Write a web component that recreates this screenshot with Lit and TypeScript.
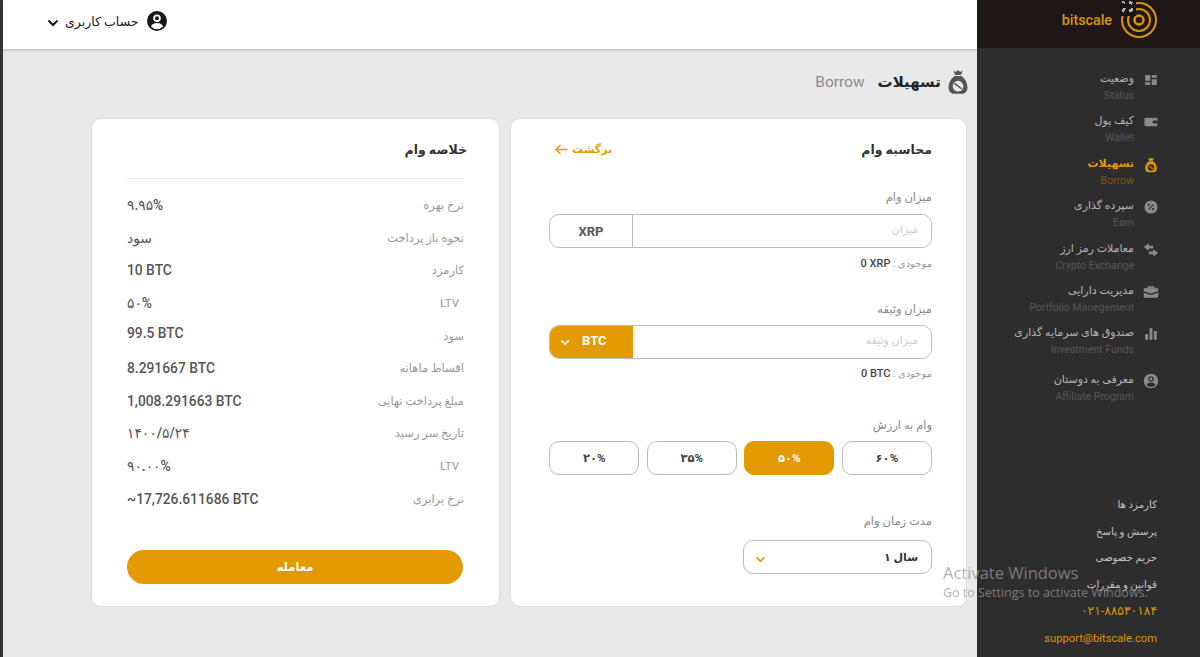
import { LitElement, html, css, svg } from 'lit';
import { customElement } from 'lit/decorators.js';

const ICONS: Record<string, unknown> = {
  status: svg`<path d="M3 4h7v8H3zM12 4h7v4h-7zM12 10h7v8h-7zM3 14h7v4H3z"/>`,
  wallet: svg`<path fill-rule="evenodd" d="M4 5h14a2 2 0 0 1 2 2v8a2 2 0 0 1-2 2H4a2 2 0 0 1-2-2V7a2 2 0 0 1 2-2zm11 4a2 2 0 0 0 0 4h5V9z"/>`,
  bag: svg`<path fill-rule="evenodd" d="M7 1l2 1.500L11 1l2 1.500L15 1l-1.500 4h-5zM8 6h6c3 2.500 5 5.500 5 9.500 0 3.500-2 5.500-4.500 5.500h-7C5 21 3 19 3 15.500 3 11.500 5 8.500 8 6zm3 4a4.500 4.500 0 1 0 0 9 4.500 4.500 0 0 0 0-9zm-2.600 1.700l6 4.600-.8.900-6-4.600z"/>`,
  earn: svg`<path fill-rule="evenodd" d="M11 2a9 9 0 1 1 0 18 9 9 0 0 1 0-18zM14 7l-7 7 1 1 7-7zM8 6.500a1.500 1.500 0 1 0 0 3 1.500 1.500 0 0 0 0-3zm6 6a1.500 1.500 0 1 0 0 3 1.500 1.500 0 0 0 0-3z"/>`,
  exchange: svg`<path d="M8 2L1 7l7 5V9h6V5H8zM14 10l7 5-7 5v-3H8v-4h6z"/>`,
  case: svg`<path d="M8 3h6a2 2 0 0 1 2 2v1h4a1 1 0 0 1 1 1v3l-10 3L1 10V7a1 1 0 0 1 1-1h4V5a2 2 0 0 1 2-2zm0 3h6V5H8zM1 12l10 3 10-3v6a1 1 0 0 1-1 1H2a1 1 0 0 1-1-1z"/>`,
  bars: svg`<path d="M3 11h4v8H3zM9 3h4v16H9zM15 7h4v12h-4z"/>`,
  user: svg`<path fill-rule="evenodd" d="M11 1a10 10 0 1 1 0 20 10 10 0 0 1 0-20zm0 3.500a3.800 3.800 0 1 0 0 7.600 3.800 3.800 0 0 0 0-7.600zm0 1.800a2 2 0 1 1 0 4 2 2 0 0 1 0-4zM11 13c-3 0-5.500 1.300-6 3.500a8 8 0 0 0 12 0c-.5-2.200-3-3.500-6-3.500z"/>`,
};

const icon = (name: string) =>
  html`<svg viewBox="0 0 22 22" fill="currentColor">${ICONS[name]}</svg>`;

const chevron = html`<svg class="chev" viewBox="0 0 12 8" fill="none" stroke="currentColor" stroke-width="2"><path d="M1.500 1.500L6 6l4.500-4.500"/></svg>`;

const NAV = [
  { ic: 'status', fa: 'وضعیت', en: 'Status' },
  { ic: 'wallet', fa: 'کیف پول', en: 'Wallet' },
  { ic: 'bag', fa: 'تسهیلات', en: 'Borrow', active: true },
  { ic: 'earn', fa: 'سپرده گذاری', en: 'Earn' },
  { ic: 'exchange', fa: 'معاملات رمز ارز', en: 'Crypto Exchange' },
  { ic: 'case', fa: 'مدیریت دارایی', en: 'Portfolio Manegement' },
  { ic: 'bars', fa: 'صندوق های سرمایه گذاری', en: 'Investment Funds' },
  { ic: 'user', fa: 'معرفی به دوستان', en: 'Affiliate Program' },
];

const SUMMARY = [
  ['نرخ بهره', '۹.۹۵%'],
  ['نحوه باز پرداخت', 'سود'],
  ['کارمزد', '10 BTC'],
  ['LTV', '۵۰%'],
  ['سود', '99.5 BTC'],
  ['اقساط ماهانه', '8.291667 BTC'],
  ['مبلغ پرداخت نهایی', '1,008.291663 BTC'],
  ['تاریخ سر رسید', '۱۴۰۰/۵/۲۴'],
  ['LTV', '۹۰.۰۰%'],
  ['نرخ برابری', '~17,726.611686 BTC'],
];

const FOOTER = ['کارمزد ها', 'پرسش و پاسخ', 'حریم خصوصی', 'قوانین و مقررات'];

@customElement('app-root')
export class AppRoot extends LitElement {
  static styles = css`
    :host {
      display: flex;
      width: 1200px;
      height: 657px;
      overflow: hidden;
      position: relative;
      direction: rtl;
      font-family: Roboto, 'DejaVu Sans', sans-serif;
      background: #e9e9e9;
    }

    /* sidebar */
    .side {
      width: 223px;
      flex: none;
      background: #2d2d2d;
      display: flex;
      flex-direction: column;
    }
    .brand {
      height: 48px;
      flex: none;
      background: #1f1716;
      display: flex;
      align-items: center;
      gap: 8px;
      padding: 0 42px 8px 0;
      box-sizing: border-box;
      position: relative;
    }
    .rings {
      width: 38px;
      height: 38px;
    }
    .brand span {
      color: #d9950a;
      font-size: 14.300px;
      font-weight: 500;
      direction: ltr;
    }
    .glitch {
      position: absolute;
      top: 0;
      left: 143px;
      width: 16px;
      height: 16px;
    }
    .nav {
      padding: 21px 38px 0 0;
      display: flex;
      flex-direction: column;
    }
    .item {
      display: flex;
      gap: 6px;
      height: 42.400px;
      color: #8a8a8a;
    }
    .item:nth-child(8) {
      margin-top: 4px;
    }
    .item svg {
      width: 22px;
      height: 16px;
      flex: none;
      margin-top: 3px;
    }
    .item .fa {
      font-size: 11px;
      line-height: 20px;
      color: #b4b4b4;
    }
    .item .en {
      font-size: 10.500px;
      line-height: 14px;
      color: #555;
      direction: ltr;
      text-align: right;
    }
    .item.active, .item.active .fa {
      color: #e39a00;
      font-weight: 700;
    }
    .item.active .en {
      color: #7a5a12;
      font-weight: 400;
    }
    .foot {
      margin-top: auto;
      padding: 0 43px 5px 0;
      display: flex;
      flex-direction: column;
    }
    .foot div {
      height: 26.900px;
      line-height: 27px;
      font-size: 10.200px;
      color: #c4c4c4;
    }
    .foot .ph {
      color: #d9950a;
      font-size: 12.300px;
      direction: ltr;
      text-align: right;
    }
    .foot .mail {
      color: #d9950a;
      font-size: 11.200px;
      direction: ltr;
      text-align: right;
    }

    /* main column */
    .main {
      flex: 1;
      min-width: 0;
      display: flex;
      flex-direction: column;
      border-left: 3px solid #333;
    }
    .top {
      height: 49px;
      flex: none;
      box-sizing: border-box;
      background: #fff;
      box-shadow: 0 1px 3px rgba(0, 0, 0, 0.25);
      display: flex;
      justify-content: flex-end;
      align-items: center;
      padding: 0 0 7px 44px;
    }
    .acct {
      display: flex;
      align-items: center;
      gap: 7px;
      font-size: 12.500px;
      color: #222;
    }
    .acct svg {
      width: 22px;
      height: 22px;
      color: #1c1516;
    }
    .acct .chev {
      width: 12px;
      height: 8px;
      margin-right: -1px;
      margin-top: 3px;
    }
    .body {
      flex: 1;
      padding: 20px 10px 0 0;
    }
    .title {
      display: flex;
      align-items: center;
      height: 26px;
      gap: 13px;
    }
    .title svg {
      width: 26px;
      height: 26px;
      color: #555;
      margin: 0 -3.500px 0 -9.500px;
    }
    .title b {
      font-size: 15px;
      color: #222;
    }
    .title span {
      font-size: 15.500px;
      color: #8c8c8c;
      direction: ltr;
    }
    .cards {
      display: flex;
      gap: 10px;
      margin-top: 23px;
    }
    .card {
      height: 489px;
      box-sizing: border-box;
      background: #fff;
      border: 1px solid #ddd;
      border-radius: 10px;
    }
    .calc {
      width: 457px;
      padding: 18px 34px 0 38px;
    }
    .sum {
      width: 409px;
      padding: 18px 36px 0 35px;
    }
    .head {
      display: flex;
      justify-content: space-between;
      align-items: center;
      height: 24px;
      font-size: 12.500px;
      font-weight: 700;
      color: #333;
    }
    .sum .head {
      margin-right: -4px;
    }
    .back {
      display: flex;
      align-items: center;
      gap: 4px;
      font-size: 11px;
      color: #e39a00;
      margin-left: 6px;
    }
    .back svg {
      width: 13px;
      height: 11px;
    }
    .label {
      font-size: 11.500px;
      line-height: 16px;
      color: #888;
    }
    .f1 { margin-top: 28px; }
    .f2 { margin-top: 29px; }
    .f3 { margin-top: 35px; }
    .f4 { margin-top: 38px; }
    .group {
      display: flex;
      height: 34px;
      margin-top: 8px;
      box-sizing: border-box;
      border: 1px solid #bbb;
      border-radius: 10px;
      overflow: hidden;
    }
    .f1 + .group {
      margin-top: 9px;
    }
    .f1 + .group + .bal {
      margin-top: 8px;
    }
    .group input {
      flex: 1;
      min-width: 0;
      border: none;
      outline: none;
      padding: 0 13px 3px;
      font: 11px Roboto, 'DejaVu Sans', sans-serif;
      direction: rtl;
    }
    .group input::placeholder {
      color: #ccc;
    }
    .cur {
      width: 83px;
      flex: none;
      box-sizing: border-box;
      border-right: 1px solid #bbb;
      display: flex;
      align-items: center;
      justify-content: center;
      direction: ltr;
      font-size: 13px;
      font-weight: 700;
      color: #555;
    }
    .cur.on {
      background: #e39a00;
      border-right: none;
      color: #fff;
      margin: -1px 0 -1px -1px;
      height: 34px;
      width: 84px;
      justify-content: flex-start;
      gap: 12px;
      padding: 0 0 3px 11px;
    }
    .cur.on .chev {
      width: 10px;
      height: 7px;
      flex: none;
      margin-top: 4px;
    }
    .bal {
      margin-top: 7px;
      font-size: 10px;
      line-height: 16px;
      color: #999;
    }
    .bal b {
      color: #444;
      font-family: Roboto, sans-serif;
      font-size: 11px;
      font-weight: 500;
      direction: ltr;
      display: inline-block;
    }
    .pcts {
      display: grid;
      grid-template-columns: repeat(4, 1fr);
      gap: 7.300px;
      margin-top: 8px;
    }
    .pct {
      height: 34px;
      box-sizing: border-box;
      border: 1px solid #bbb;
      border-radius: 10px;
      display: flex;
      align-items: center;
      justify-content: center;
      font-size: 11.500px;
      font-weight: 700;
      color: #444;
    }
    .pct.on {
      background: #e39a00;
      border-color: #e39a00;
      color: #fff;
    }
    .select {
      width: 189px;
      height: 34px;
      margin-top: 11px;
      box-sizing: border-box;
      border: 1px solid #bbb;
      border-radius: 10px;
      display: flex;
      justify-content: space-between;
      align-items: center;
      padding: 0 13px 0 11px;
      font-size: 11px;
      font-weight: 700;
      color: #333;
    }
    .select .chev {
      width: 11px;
      height: 7px;
      color: #e39a00;
      margin-top: 4px;
    }
    .sum hr {
      border: none;
      border-top: 1px solid #e4e4e4;
      margin: 17px 0 0;
    }
    .rows {
      margin-top: 10px;
    }
    .row {
      display: flex;
      justify-content: space-between;
      align-items: center;
      height: 32.600px;
      font-size: 11.500px;
      color: #999;
    }
    .row b {
      font-size: 13.800px;
      font-weight: 500;
      color: #555;
      direction: ltr;
    }
    .row:nth-child(5) b {
      margin-bottom: 6px;
    }
    .row span {
      margin-right: -1px;
    }
    .row span.ltv {
      margin-right: 4px;
    }
    .cta {
      height: 34px;
      margin-top: 35px;
      border-radius: 17px;
      background: #e39a00;
      color: #fff;
      font-size: 11.500px;
      font-weight: 700;
      display: flex;
      align-items: center;
      justify-content: center;
    }

    /* windows watermark, lies over the page */
    .wm {
      position: absolute;
      left: 943px;
      top: 563px;
      direction: ltr;
      font-family: 'Open Sans', sans-serif;
      color: rgba(150, 150, 150, 0.75);
      pointer-events: none;
    }
    .wm div:first-child {
      font-size: 16.500px;
      line-height: 20px;
    }
    .wm div:last-child {
      font-size: 12.500px;
      line-height: 20px;
    }
  `;

  render() {
    return html`
      <aside class="side">
        <div class="brand">
          <svg class="rings" viewBox="0 0 38 38" fill="none" stroke="#d9950a">
            <circle cx="19" cy="19" r="17" stroke-width="2" />
            <circle cx="19" cy="19" r="11" stroke-width="2" />
            <circle cx="19" cy="19" r="4.500" stroke-width="2.500" />
          </svg>
          <span>bitscale</span>
          <svg class="glitch" viewBox="0 0 16 16">
            <rect width="16" height="16" fill="#1a1414" />
            <path d="M2 1h2v1h1v2H4V3H2zM9 1h2v1h2v1h-1v2h-1V4H9zM2 9h1V8h3v1H5v2H4v1H2zM9 9h2V8h2v3h-1v1H9z" fill="#b5b5b5" />
          </svg>
        </div>
        <nav class="nav">
          ${NAV.map(
            (n) => html`<div class="item ${n.active ? 'active' : ''}">
              ${icon(n.ic)}
              <div>
                <div class="fa">${n.fa}</div>
                <div class="en">${n.en}</div>
              </div>
            </div>`
          )}
        </nav>
        <div class="foot">
          ${FOOTER.map((t) => html`<div>${t}</div>`)}
          <div class="ph">۰۲۱-۸۸۵۳۰۱۸۴</div>
          <div class="mail">support@bitscale.com</div>
        </div>
      </aside>

      <section class="main">
        <header class="top">
          <div class="acct">
            ${icon('user')}
            <span>حساب کاربری</span>
            ${chevron}
          </div>
        </header>
        <div class="body">
          <div class="title">
            ${icon('bag')}
            <b>تسهیلات</b>
            <span>Borrow</span>
          </div>
          <div class="cards">
            <div class="card calc">
              <div class="head">
                <span>محاسبه وام</span>
                <span class="back">
                  برگشت
                  <svg viewBox="0 0 13 11" fill="none" stroke="currentColor" stroke-width="1.300"><path d="M12.500 5.500H1M5.500 1L1 5.500 5.500 10" /></svg>
                </span>
              </div>
              <div class="label f1">میزان وام</div>
              <div class="group">
                <input placeholder="میزان" />
                <div class="cur">XRP</div>
              </div>
              <div class="bal">موجودی : <b>0 XRP</b></div>
              <div class="label f2">میزان وثیقه</div>
              <div class="group">
                <input placeholder="میزان وثیقه" />
                <div class="cur on">${chevron}<span>BTC</span></div>
              </div>
              <div class="bal">موجودی : <b>0 BTC</b></div>
              <div class="label f3">وام به ارزش</div>
              <div class="pcts">
                <div class="pct">۶۰%</div>
                <div class="pct on">۵۰%</div>
                <div class="pct">۳۵%</div>
                <div class="pct">۲۰%</div>
              </div>
              <div class="label f4">مدت زمان وام</div>
              <div class="select"><span>سال ۱</span>${chevron}</div>
            </div>
            <div class="card sum">
              <div class="head"><span>خلاصه وام</span></div>
              <hr />
              <div class="rows">
                ${SUMMARY.map(
                  ([k, v]) => html`<div class="row"><span class="${k === 'LTV' ? 'ltv' : ''}">${k}</span><b>${v}</b></div>`
                )}
              </div>
              <div class="cta">معامله</div>
            </div>
          </div>
        </div>
      </section>

      <div class="wm">
        <div>Activate Windows</div>
        <div>Go to Settings to activate Windows.</div>
      </div>
    `;
  }
}

declare global {
  interface HTMLElementTagNameMap {
    'app-root': AppRoot;
  }
}
